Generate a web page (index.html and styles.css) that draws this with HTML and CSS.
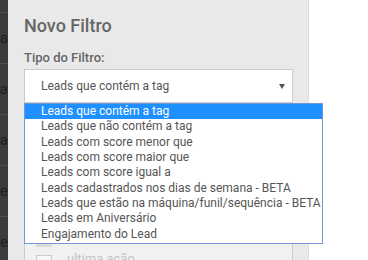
FILE: index.html
```html
<!DOCTYPE html>
<html lang="pt-BR">
<head>
  <meta charset="UTF-8">
  <meta name="viewport" content="width=device-width, initial-scale=1">
  <title>Novo Filtro</title>
  <link rel="stylesheet" href="styles.css">
</head>
<body>
  <div class="screen">
    <!-- lista atrás do modal -->
    <div class="backdrop">
      <div class="bd-row"><span>Leads que contém a ta</span></div>
      <div class="bd-row"><span>Leads que contém a ta</span></div>
      <div class="bd-row"><span>Leads que contém a ta</span></div>
      <div class="bd-row"><span>Leads com score menor que</span></div>
      <div class="bd-row"><span>Leads com score maior que</span></div>
    </div>

    <div class="panel">
      <h2 class="title">Novo Filtro</h2>
      <label class="label" for="tipo">Tipo do Filtro:</label>

      <div class="select-wrap">
        <div class="select" id="tipo">
          <span>Leads que contém a tag</span>
          <svg class="arrow" width="6" height="5" viewBox="0 0 6 5"><polygon points="0,0 6,0 3,5" fill="#555"/></svg>
        </div>
        <ul class="options">
          <li class="selected">Leads que contém a tag</li>
          <li>Leads que não contém a tag</li>
          <li>Leads com score menor que</li>
          <li>Leads com score maior que</li>
          <li>Leads com score igual a</li>
          <li>Leads cadastrados nos dias de semana - BETA</li>
          <li>Leads que estão na máquina/funil/sequência - BETA</li>
          <li>Leads em Aniversário</li>
          <li>Engajamento do Lead</li>
        </ul>
      </div>

      <div class="tags">
        <div class="check-row"><span class="box"></span><span>Cliente</span></div>
        <div class="check-row"><span class="box"></span><span>Lead frio</span></div>
        <div class="check-row"><span class="box"></span><span>Lead quente</span></div>
        <div class="check-row"><span class="box"></span><span>Newsletter</span></div>
        <div class="check-row"><span class="box off"></span><span>Webinar</span></div>
        <div class="check-row"><span class="box"></span><span>ultima ação</span></div>
      </div>
    </div>

    <div class="rest"></div>
  </div>
</body>
</html>
```

FILE: styles.css
```css
body {
  margin: 0;
  background-color: #ffffff;
  font-family: Roboto, "Liberation Sans", sans-serif;
}
.screen {
  display: flex;
  height: 260px;
  overflow: hidden;
}
.backdrop {
  width: 8px;
  flex-shrink: 0;
  background-color: #3c3c3c;
  padding-top: 12px;
  overflow: hidden;
}
.bd-row {
  height: 50px;
  border-top: 1px solid #4e4e4e;
  display: flex;
  align-items: center;
  justify-content: flex-end;
  white-space: nowrap;
  font-size: 15px;
  color: #1f1f1f;
}
.panel {
  width: 301px;
  flex-shrink: 0;
  box-sizing: border-box;
  background-color: #e9e9e9;
  border-right: 1px solid #dcdcdc;
  padding: 14px 15px 0 16px;
}
.title {
  margin: 0;
  font-size: 18px;
  font-weight: 500;
  line-height: 24px;
  color: #666;
}
.label {
  display: block;
  margin: 12px 0 3px;
  font-size: 13px;
  font-weight: 500;
  line-height: 16px;
  color: #666;
}
.select-wrap {
  position: relative;
}
.select {
  height: 34px;
  box-sizing: border-box;
  display: flex;
  align-items: center;
  justify-content: space-between;
  padding: 0 7px 0 16px;
  background-color: #fff;
  border: 1px solid #cccccc;
  font-size: 12px;
  color: #555;
}
.arrow {
  display: block;
}
.options {
  position: absolute;
  top: 100%;
  left: 0;
  z-index: 2;
  width: 299px;
  box-sizing: border-box;
  margin: 0;
  padding: 0 0 1px;
  list-style: none;
  background-color: #fff;
  border: 1px solid #7396d6;
}
.options li {
  padding-left: 16px;
  font-size: 12px;
  line-height: 15.33px;
  color: #555;
  white-space: nowrap;
}
.options li.selected {
  background-color: #1e90ff;
  color: #fff;
}
.tags {
  margin-top: 8px;
  padding: 19px 11px 0;
  background-color: #f1f1f1;
  border: 1px solid #cccccc;
}
.check-row {
  height: 24px;
  display: flex;
  align-items: flex-start;
  gap: 15px;
  font-size: 13px;
  color: #c4c4c4;
}
.box {
  margin-top: 4px;
  width: 16px;
  height: 16px;
  box-sizing: border-box;
  border: 1px solid #cccccc;
  background-color: #f7f7f7;
}
.box.off {
  background-color: #dadada;
  border-color: #dadada;
}
.rest {
  flex: 1;
  background-color: #fff;
}
```
